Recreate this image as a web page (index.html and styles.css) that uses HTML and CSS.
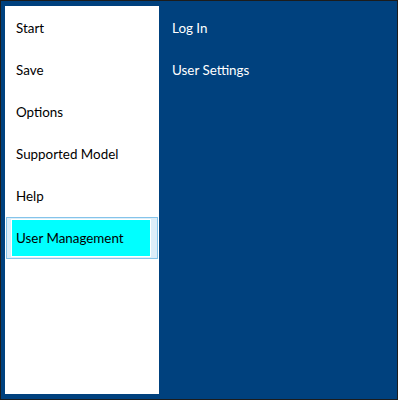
FILE: index.html
```html
<!DOCTYPE html>
<html lang="en">
<head>
    <meta charset="UTF-8">
    <title>User Management</title>
    <link rel="stylesheet" href="styles.css">
</head>
<body>

    <div class="window">
        <ul class="menu">
            <li class="item"><span class="label">Start</span></li>
            <li class="item"><span class="label">Save</span></li>
            <li class="item"><span class="label">Options</span></li>
            <li class="item"><span class="label">Supported Model</span></li>
            <li class="item"><span class="label">Help</span></li>
            <li class="item selected"><span class="label">User Management</span></li>
        </ul>

        <ul class="submenu">
            <li class="subitem">Log In</li>
            <li class="subitem">User Settings</li>
        </ul>
    </div>

</body>
</html>
```

FILE: styles.css
```css
body {
    margin: 0;
    font-family: Lato, "Noto Sans", sans-serif;
    font-size: 13.4px;
}

ul {
    list-style: none;
    margin: 0;
}

.window {
    box-sizing: border-box;
    width: 398px;
    height: 400px;
    border: 1px solid #1c1c1c;
    background: #00417e;
    padding: 5px 0 5px 4px;
    display: flex;
}

.menu {
    width: 154px;
    background: #fff;
    padding: 1px;
    box-sizing: border-box;
    color: #000;
}

.item {
    height: 42px;
    box-sizing: border-box;
    border: 1px solid transparent;
    display: flex;
}

.item .label {
    flex: 1;
    margin: 1px 6px 1px 4px;
    border: 1px solid transparent;
    padding: 0 0 1px 4px;
    display: flex;
    align-items: center;
}

.item.selected {
    border-color: #84c4ea;
    background: #dcedf9;
}

.item.selected .label {
    border-color: #fff;
    background: #00ffff;
}

.submenu {
    flex: 1;
    padding: 1px 0 0 13px;
    color: #fff;
}

.subitem {
    height: 42px;
    display: flex;
    align-items: center;
}
```
